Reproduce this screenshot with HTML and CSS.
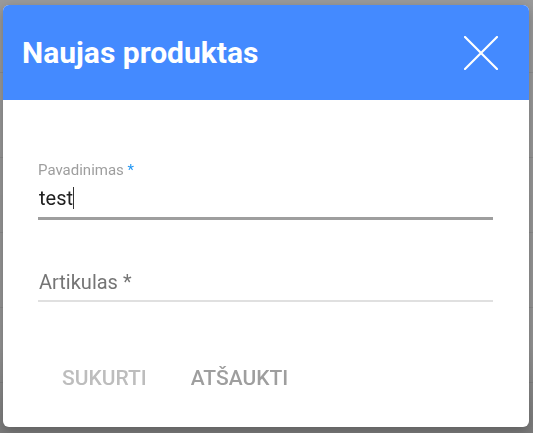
FILE: index.html
```html
<!DOCTYPE html>
<html lang="lt">
<head>
<meta charset="utf-8">
<title>Naujas produktas</title>
<link rel="stylesheet" href="styles.css">
</head>
<body>
<div class="page">
  <div class="row row-first"></div>
  <div class="row row-tall"></div>
  <div class="row"></div>
  <div class="row"></div>
  <div class="row"></div>
</div>
<div class="backdrop">
  <div class="dialog">
    <div class="dialog-header">
      <h1 class="dialog-title">Naujas produktas</h1>
      <button class="close-btn" aria-label="Uždaryti">
        <svg width="34" height="34" viewBox="0 0 34 34"><path d="M1 1 L33 33 M33 1 L1 33" stroke="#fff" stroke-width="2.2" stroke-linecap="round" fill="none"/></svg>
      </button>
    </div>
    <div class="dialog-body">
      <div class="field field-focused">
        <label class="field-label">Pavadinimas <span class="req">*</span></label>
        <div class="field-input">test<span class="caret"></span></div>
      </div>
      <div class="field field-empty">
        <div class="field-input placeholder">Artikulas *</div>
      </div>
      <div class="actions">
        <button class="btn btn-disabled">SUKURTI</button>
        <button class="btn btn-cancel">ATŠAUKTI</button>
      </div>
    </div>
  </div>
</div>
</body>
</html>
```
FILE: styles.css
```css
html, body {
  margin: 0;
  height: 100%;
}
body {
  background: #9a9a9a;
  font-family: Roboto, "Noto Sans", "Liberation Sans", sans-serif;
  overflow: hidden;
}
.page {
  display: flex;
  flex-direction: column;
}
.row {
  height: 75px;
  border-bottom: 1px solid #8e8e8e;
  box-sizing: border-box;
}
.row-first { height: 73px; }
.row-tall { height: 85px; }
.backdrop {
  position: fixed;
  inset: 0;
  background: linear-gradient(to bottom, rgba(0,0,0,0) 0%, rgba(0,0,0,0.03) 80%, rgba(0,0,0,0.2) 100%);
}
.dialog {
  position: absolute;
  left: 3px;
  top: 5px;
  width: 526px;
  height: 422px;
  background: #fff;
  border-radius: 6px;
  overflow: hidden;
  box-shadow: 0 4px 12px rgba(0,0,0,0.25);
  display: flex;
  flex-direction: column;
}
.dialog-header {
  height: 95px;
  background: #448aff;
  display: flex;
  align-items: center;
  justify-content: space-between;
  padding: 0 31px 0 19px;
  flex-shrink: 0;
}
.dialog-title {
  margin: 0;
  color: #fff;
  font-size: 30px;
  font-weight: 700;
  letter-spacing: 0;
}
.close-btn {
  background: none;
  border: 0;
  padding: 0;
  width: 34px;
  height: 34px;
  display: flex;
}
.dialog-body {
  padding: 62px 36px 0 35px;
  display: flex;
  flex-direction: column;
}
.field {
  display: flex;
  flex-direction: column;
}
.field-label {
  font-size: 15px;
  color: #9e9e9e;
  line-height: 16px;
}
.req { color: #2196f3; }
.field-input {
  font-size: 20px;
  line-height: 28px;
  color: #212121;
  padding: 0 0 5px 1px;
  display: flex;
  align-items: center;
}
.caret {
  display: inline-block;
  width: 1px;
  height: 22px;
  background: #333;
}
.field-focused .field-input {
  border-bottom: 3px solid #9e9e9e;
  margin-top: 6px;
}
.field-empty {
  margin-top: 48px;
}
.field-empty .field-input {
  border-bottom: 2px solid #e0e0e0;
  padding-bottom: 4px;
}
.placeholder {
  color: #757575;
}
.actions {
  display: flex;
  margin-top: 58px;
  padding-left: 2px;
}
.btn {
  background: none;
  border: 0;
  font-family: inherit;
  font-size: 21px;
  font-weight: 500;
  padding: 8px 22px;
  line-height: 20px;
}
.btn-disabled { color: #bdbdbd; }
.btn-cancel { color: #9e9e9e; }
```
